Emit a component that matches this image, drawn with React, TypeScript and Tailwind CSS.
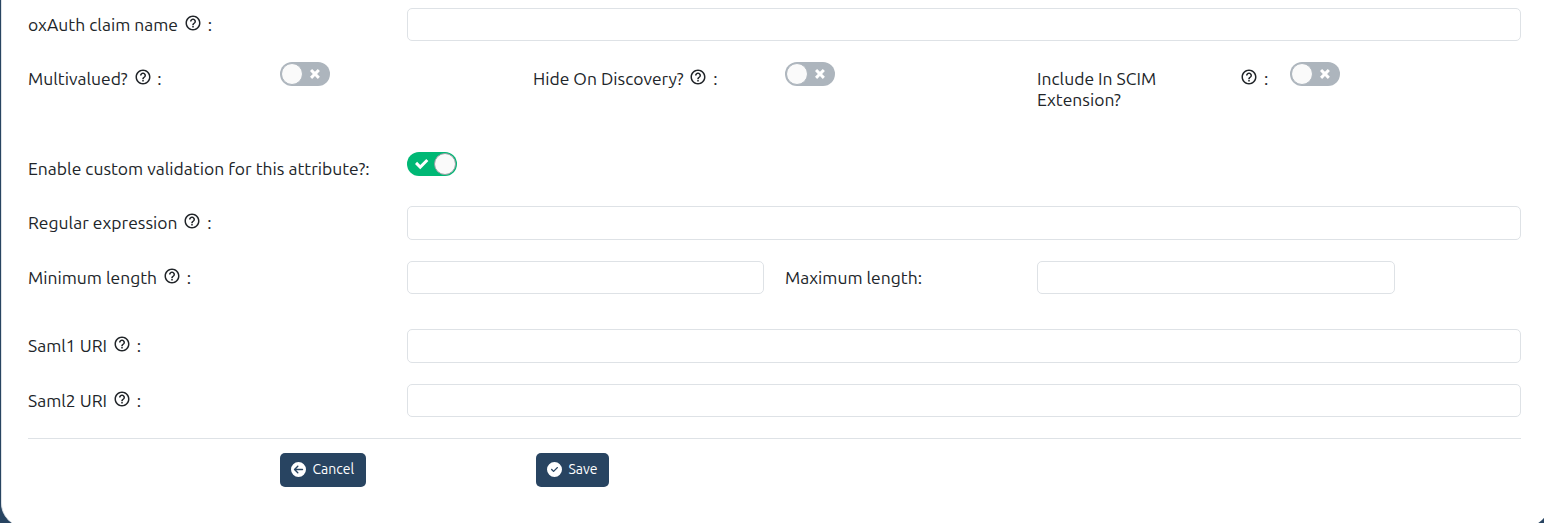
import type { ReactNode } from 'react'
import { MdHelpOutline } from 'react-icons/md'
import { FaCircleArrowLeft, FaCircleCheck } from 'react-icons/fa6'

function Label({ text, help = true, className = '' }: { text: string; help?: boolean; className?: string }) {
  return (
    <div className={`flex items-start pt-[6px] text-[17.5px] leading-[21px] whitespace-nowrap ${className}`}>
      <span>{text}</span>
      {help && (
        <>
          <MdHelpOutline className="ml-[5.87px] size-[18px] shrink-0" />
          <span className="ml-[5.8px]">:</span>
        </>
      )}
    </div>
  )
}

function Field({ className }: { className: string }) {
  return <input className={`block rounded-[5px] border border-[#dee2e6] bg-white px-3 outline-none ${className}`} />
}

function Toggle({ on = false }: { on?: boolean }) {
  return on ? (
    <button className="flex h-6 w-[50px] items-center justify-between rounded-full bg-[#00b875] pl-2">
      <svg width="14" height="11" viewBox="0 0 14 11" fill="#fff">
        <path d="M11.264 0L5.26 6.004 2.103 2.847 0 4.95l5.26 5.26 8.108-8.107L11.264 0" />
      </svg>
      <span className="mr-px size-[22px] rounded-full border border-[#979fa3] bg-[#fafafa]" />
    </button>
  ) : (
    <button className="flex h-6 w-[50px] items-center justify-between rounded-full bg-[#adb5bd] pr-2.5 pl-px">
      <span className="size-[22px] rounded-full border border-[#adb5bd] bg-[#fafafa]" />
      <svg width="10" height="10" viewBox="0 0 10 10" fill="#fff">
        <path d="M9.9 2.12L7.78 0 4.95 2.828 2.12 0 0 2.12l2.83 2.83L0 7.776 2.123 9.9 4.95 7.07 7.78 9.9 9.9 7.776 7.072 4.95 9.9 2.12" />
      </svg>
    </button>
  )
}

function Action({ icon, children, className }: { icon: ReactNode; children: ReactNode; className: string }) {
  return (
    <button className={`flex h-[34px] items-center gap-[6.5px] rounded-[5px] bg-[#284461] pb-px pl-[11px] text-[14px] text-white ${className}`}>
      {icon}
      <span>{children}</span>
    </button>
  )
}

export default function App() {
  return (
    <main className="h-[523px] w-full overflow-hidden bg-[#284461] pl-px font-['Ubuntu','Noto_Sans',sans-serif] text-[#212529]">
      <form className="h-[527px] w-[1548px] rounded-b-[24px] border-l border-[#dee2e6] bg-white pt-2 pl-[26px]">
        <div className="flex h-[54px]">
          <Label text="oxAuth claim name" className="w-[379px]" />
          <Field className="h-[33px] w-[1114px]" />
        </div>
        <div className="flex h-[90px]">
          <Label text="Multivalued?" className="w-[252px]" />
          <div className="w-[253px]"><Toggle /></div>
          <Label text="Hide On Discovery?" className="w-[252px]" />
          <div className="w-[252px]"><Toggle /></div>
          <div className="flex w-[253px] pt-[6px] text-[17.5px] leading-[21px]">
            <span className="w-[203px] pr-16">Include In SCIM Extension?</span>
            <MdHelpOutline className="size-[18px] shrink-0" />
            <span className="ml-[6px]">:</span>
          </div>
          <Toggle />
        </div>
        <div className="flex h-[54px]">
          <Label text="Enable custom validation for this attribute?:" help={false} className="w-[379px]" />
          <Toggle on />
        </div>
        <div className="flex h-[55px]">
          <Label text="Regular expression" className="w-[379px]" />
          <Field className="h-[34px] w-[1114px]" />
        </div>
        <div className="flex h-[68px]">
          <Label text="Minimum length" className="w-[379px]" />
          <Field className="h-[33px] w-[357px]" />
          <Label text="Maximum length:" help={false} className="ml-[21px] w-[252px]" />
          <Field className="h-[33px] w-[358px]" />
        </div>
        <div className="flex h-[55px]">
          <Label text="Saml1 URI" className="w-[379px]" />
          <Field className="h-[34px] w-[1114px]" />
        </div>
        <div className="flex h-[54px]">
          <Label text="Saml2 URI" className="w-[379px]" />
          <Field className="h-[33px] w-[1114px]" />
        </div>
        <div className="flex w-[1493px] border-t border-[#dee2e6] pt-[14px] pl-[252px]">
          <Action className="w-[86px]" icon={<FaCircleArrowLeft className="size-[15px]" />}>Cancel</Action>
          <Action className="ml-[170px] w-[73px]" icon={<FaCircleCheck className="size-[15px]" />}>Save</Action>
        </div>
      </form>
    </main>
  )
}
